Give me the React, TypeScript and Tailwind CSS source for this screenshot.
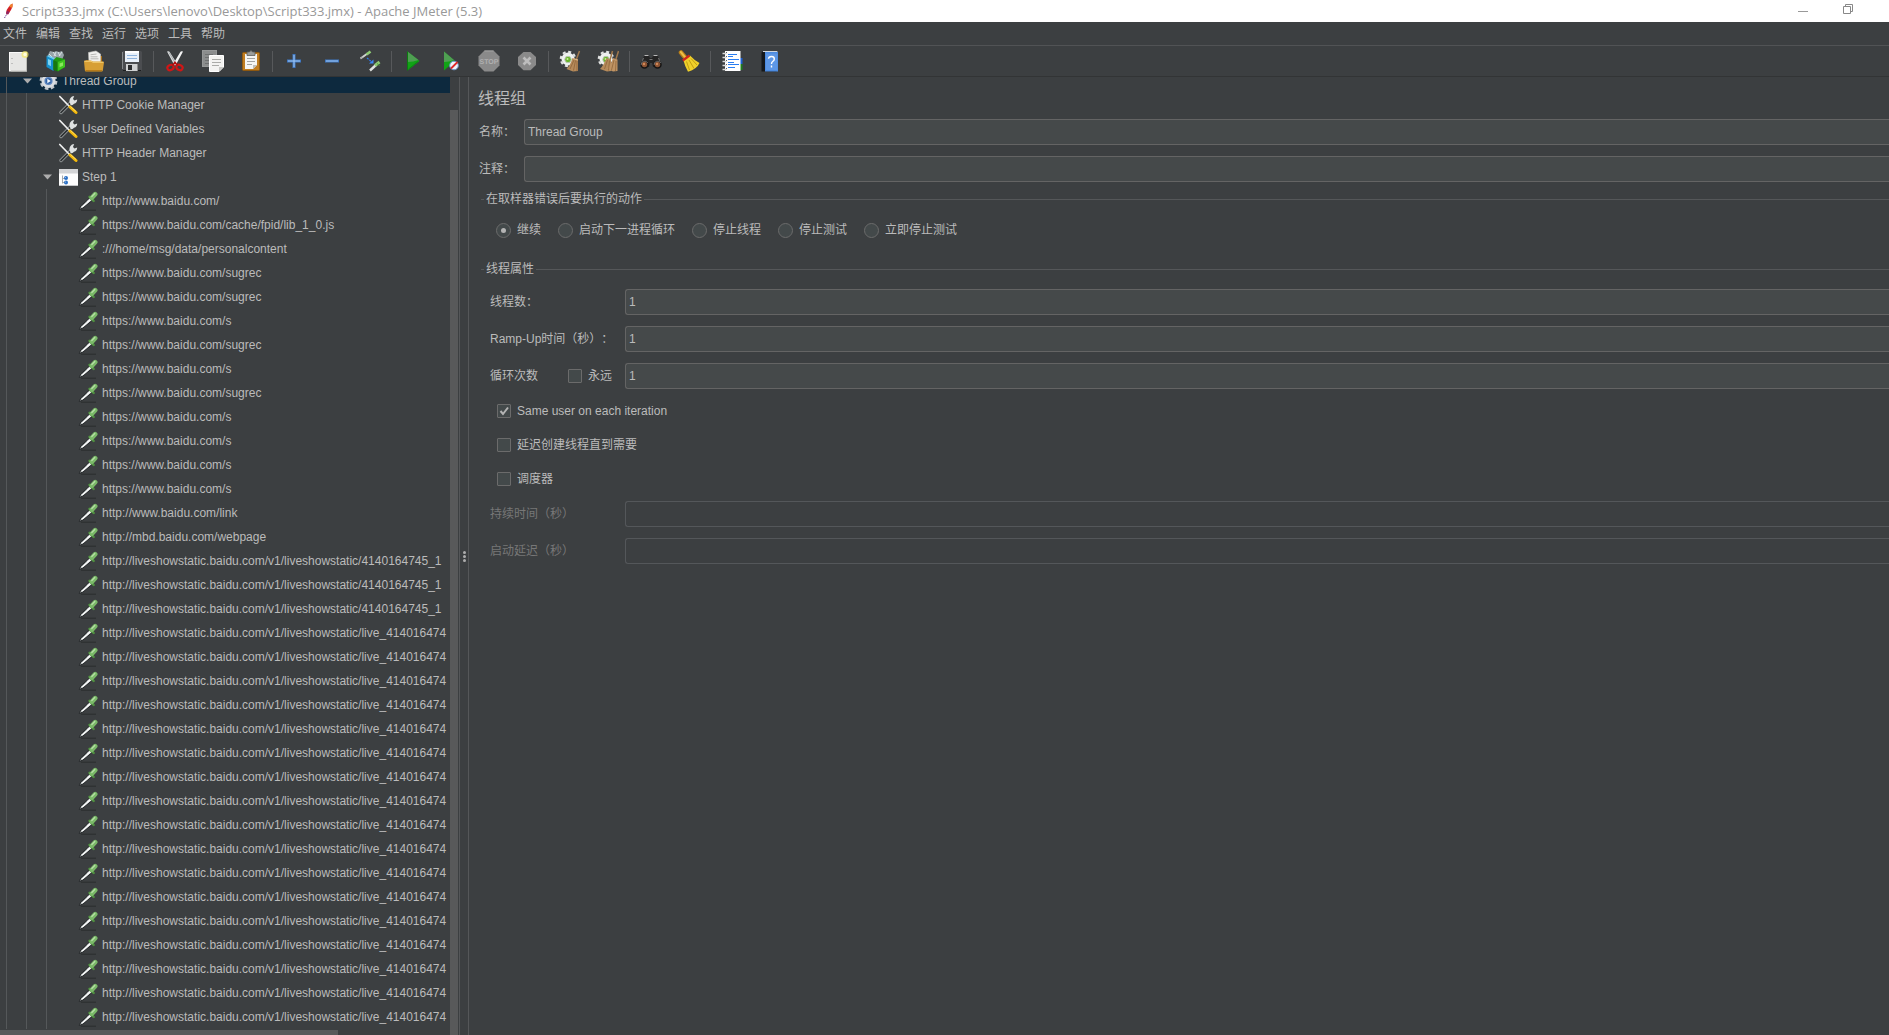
import React, { useState } from "react";

type IconProps = { children: React.ReactNode };

function Glyph({ children }: IconProps) {
  return (
    <svg viewBox="0 0 22 22" className="h-[22px] w-[22px]" fill="none" aria-hidden="true">
      {children}
    </svg>
  );
}

const NewIcon = () => (
  <Glyph>
    <rect x="2.500" y="2.500" width="17" height="18.500" fill="#e6e6e4" stroke="#fafafa" />
    <path d="M4 21h15.500V7" stroke="#bdbdb8" />
    <path d="M4.500 8.500h1M4.500 13.500h1" stroke="#999" />
    <circle cx="18" cy="4.500" r="3.500" fill="#f5e86a" fillOpacity=".7" />
    <circle cx="18" cy="4.500" r="1.700" fill="#fffde0" />
  </Glyph>
);

const TemplatesIcon = () => (
  <Glyph>
    <path d="M3 5l2-4 4 1 2-1 3 1 3-1 2 4-2 5-12 1z" fill="#98a4a9" />
    <path d="M4 4l3 3M8 2l3 4M13 2l2 4M9 6l2-4M14 6l3-4" stroke="#dde4e7" />
    <path d="M1.500 6l7 3v12L1.500 17z" fill="#1792cf" />
    <path d="M1.500 6l2-.8 6.500 3-1.500 1z" fill="#6fd0f5" />
    <path d="M3 9l3 1.300v6L3 14.500z" fill="#7fd4f2" />
    <path d="M8.500 10l3-3 8 2 .5 8-7 4.500-4.500-2z" fill="#1f9a12" />
    <path d="M12.500 12L20 9.500V17l-7.500 4z" fill="#3fc51f" />
    <path d="M8.500 10l4 2v9.500l-4-1.800z" fill="#17780f" />
    <path d="M14.500 13.500l3.500-1.300v3.500l-3.500 1.500z" fill="#8be65f" />
  </Glyph>
);

const OpenIcon = () => (
  <Glyph>
    <path d="M3 10h4V6h12v6H3z" fill="#a86f17" />
    <path d="M5.500 2.500L13 1l4.500 3v9H6z" fill="#f1f1ef" stroke="#c9c9c5" strokeWidth=".6" />
    <path d="M7.500 4.800l6-.8M7.500 6.800h7M7.500 8.800h8" stroke="#a8a8a4" strokeWidth=".8" />
    <path d="M1 11.500q0-1 1-1h6l2 1h10q1 0 1 1l-1.200 8q-.1 1-1 1H3q-1 0-1.100-1z" fill="#d79f35" />
    <path d="M1.500 11.300h6.500l2 1h10.300" stroke="#f3cd74" />
    <path d="M2.500 20.800h16.500" stroke="#a96c10" />
  </Glyph>
);

const SaveIcon = () => (
  <Glyph>
    <path d="M2 1h18l1 1v18l-1 1H3l-2-2V2z" fill="#4b4d50" />
    <path d="M1.500 19V2" stroke="#85888b" />
    <path d="M2 20.500h18" stroke="#1d1e1f" />
    <rect x="4" y="1" width="14" height="11" fill="#e9f1fa" />
    <path d="M4 2h14" stroke="#fff" strokeWidth="2" />
    <path d="M6 5.500h10M6 8.500h10" stroke="#8fb4de" />
    <rect x="5" y="14" width="12" height="7" fill="#cfd1d2" />
    <rect x="7" y="15" width="4" height="5" fill="#2b2d2f" />
    <path d="M16.500 14v7" stroke="#8d8f90" />
  </Glyph>
);

const CutIcon = () => (
  <Glyph>
    <path d="M3 1.500q2-1 3 1l7 11-2.500 2z" fill="#d9dcdd" />
    <path d="M19 1.500q-2-1-3 1L9.500 13.500l2 2z" fill="#f4f5f5" />
    <path d="M5 2.500l6.500 11" stroke="#8e9293" strokeWidth=".7" />
    <ellipse cx="6.500" cy="17.500" rx="3.200" ry="2.600" stroke="#d01616" strokeWidth="2.200" transform="rotate(-25 6.500 17.500)" />
    <ellipse cx="15.500" cy="17.500" rx="3.200" ry="2.600" stroke="#d01616" strokeWidth="2.200" transform="rotate(25 15.500 17.500)" />
    <path d="M8.500 15.500l2.500-3 2.500 3" stroke="#b30f0f" strokeWidth="1.800" />
  </Glyph>
);

const CopyIcon = () => (
  <Glyph>
    <rect x=".5" y=".5" width="14" height="16" fill="#8b8d8d" stroke="#969898" />
    <path d="M3 4.500h8M3 7.500h4M3 10.500h4M3 13.500h4" stroke="#6e7070" />
    <path d="M7.500 5.500h14V17L17 21.500H7.500z" fill="#f3f3f1" stroke="#fff" />
    <path d="M10 9.500h9M10 12.500h9M10 15.500h7" stroke="#aaaba8" />
    <path d="M17 21.500V17h4.500z" fill="#c7c8c5" />
  </Glyph>
);

const PasteIcon = () => (
  <Glyph>
    <rect x="2.500" y="2.500" width="17" height="18" rx="1" fill="#c07d20" stroke="#8f5910" />
    <path d="M5 4h12v11l-4 4H5z" fill="#f5f5f3" />
    <path d="M13 19v-4h4z" fill="#bdbeba" />
    <path d="M7 8.500h8M7 11.500h8M7 14.500h5" stroke="#a3a4a1" />
    <path d="M7 2h2.500q1.500-3 3 0H15v3.500H7z" fill="#9b9d9b" stroke="#5c5e5c" strokeWidth=".8" />
  </Glyph>
);

const PlusIcon = () => (
  <Glyph>
    <path d="M11 4v14M4 11h14" stroke="#3f78c4" strokeWidth="3" />
    <path d="M11 5v12M5 11h12" stroke="#a5cbf5" strokeWidth="1" />
  </Glyph>
);

const MinusIcon = () => (
  <Glyph>
    <path d="M4 11h14" stroke="#3f78c4" strokeWidth="3" />
    <path d="M5 11h12" stroke="#a5cbf5" strokeWidth="1" />
  </Glyph>
);

const ToggleIcon = () => (
  <Glyph>
    <path d="M1.500 8.500l7-5" stroke="#cfd2d0" strokeWidth="2" />
    <path d="M7.500 4.500l4-3" stroke="#8ecb74" strokeWidth="2.800" />
    <path d="M1 9l2.500-1.800" stroke="#8c8f8f" />
    <path d="M8 8l5.500 4.500" stroke="#2f78ea" strokeWidth="1.200" strokeDasharray="2 1" />
    <path d="M14.500 9.500v4h-4.500z" fill="#3a86f5" />
    <path d="M11 20.500l6-5.500" stroke="#dfe2e0" strokeWidth="2.400" />
    <path d="M16 15.500l4.500-3.500" stroke="#8ecb74" strokeWidth="3" />
    <path d="M18 13.500l2.500 2" stroke="#4e9a3a" />
  </Glyph>
);

const StartIcon = () => (
  <Glyph>
    <path d="M5.500 1.500v19L17.500 11z" fill="#11a316" />
    <path d="M5.500 1.500v10.500q6 0 11-2z" fill="#4f9f52" />
    <path d="M5.500 1.500v19" stroke="#0c7a10" />
    <path d="M6.500 19L16 11.500" stroke="#0b8a0f" />
  </Glyph>
);

const StartNoTimersIcon = () => (
  <Glyph>
    <path d="M4 1.500v19L15 11z" fill="#11a316" />
    <path d="M4 1.500v10.500q5 0 10-2z" fill="#4f9f52" />
    <circle cx="14" cy="15.500" r="4.300" fill="#eef3fa" stroke="#6d97cf" />
    <path d="M11 18.500l6.500-6.500" stroke="#dc2a2a" strokeWidth="1.800" />
  </Glyph>
);

const StopIcon = () => (
  <Glyph>
    <path d="M6.500.5h9l6 6v9l-6 6h-9l-6-6v-9z" fill="#8a8a8a" />
    <path d="M6.500 1h9" stroke="#a3a3a3" />
    <text x="11" y="14" textAnchor="middle" fontSize="7" fontWeight="700" fontFamily="Liberation Sans, Arial, sans-serif" fill="#b0b0b0" textRendering="geometricPrecision">
      STOP
    </text>
  </Glyph>
);

const ShutdownIcon = () => (
  <Glyph>
    <path d="M7.500 2h7l5.500 5v8l-5.500 5.200h-7L2 15V7z" fill="#8a8a8a" />
    <path d="M7.500 7.500l7 7M14.500 7.500l-7 7" stroke="#bdbdbd" strokeWidth="2.600" />
  </Glyph>
);

const Gear = () => (
  <>
    <circle cx="9" cy="9" r="6.500" fill="#eef0ef" />
    <circle cx="9" cy="9" r="7.200" stroke="#e2e4e3" strokeWidth="2.200" strokeDasharray="3 2.650" />
    <circle cx="9" cy="9.500" r="3.200" fill="#69b52b" stroke="#b9c4b1" />
    <circle cx="8.500" cy="9" r="1" fill="#c9ee9d" />
  </>
);

const ClearIcon = () => (
  <Glyph>
    <Gear />
    <path d="M20.500 1L17.500 9" stroke="#a0784c" strokeWidth="1.500" />
    <path d="M13.500 8l5.500 1.500V21l-5 .5-6.500-2.500q4-4 6-11z" fill="#b58a5b" />
    <path d="M15 10l-4 9M16.500 10.500l-2 10M18 11v10" stroke="#8a6035" strokeWidth=".7" />
    <path d="M14 8.500l5 1.500" stroke="#e2b987" />
  </Glyph>
);

const ClearAllIcon = () => (
  <Glyph>
    <Gear />
    <path d="M15.500 1l-2.500 9M21.500 1L19 9" stroke="#a0784c" strokeWidth="1.500" />
    <path d="M9.500 8l4.500 1.500V21l-4 .5L3 19q4-4 6.500-11z" fill="#b58a5b" />
    <path d="M16 8l4.500 1.500V21l-4.500.5-6-3Q14 15 16 8z" fill="#bf9363" />
    <path d="M10.500 10l-3 9M12.500 10.500l-1 10M17 10l-2.500 10M19 11l-.5 10" stroke="#8a6035" strokeWidth=".7" />
  </Glyph>
);

const SearchIcon = () => (
  <Glyph>
    <path d="M1 13l3.500-8h4l1.500 3h2l1.500-3h4L21 13v4h-8l-1-4h-2l-1 4H1z" fill="#242424" />
    <path d="M4.500 5.500h4M13.500 5.500h4" stroke="#b9b9b9" strokeWidth="1.200" />
    <path d="M3.500 8l-2 5M18.500 8l2 5M9.500 9.500h3" stroke="#8b8b8b" strokeWidth=".8" />
    <circle cx="4.500" cy="14.500" r="3.500" fill="#8b5232" stroke="#151515" strokeWidth="1.500" />
    <circle cx="17.500" cy="14.500" r="3.500" fill="#8b5232" stroke="#151515" strokeWidth="1.500" />
    <path d="M1.200 15a3.500 3.500 0 0 1 6.600-2M14.200 15a3.500 3.500 0 0 1 6.600-2" stroke="#8f8f8f" strokeWidth=".7" />
    <circle cx="4" cy="14" r="1.200" fill="#d08a5a" />
    <circle cx="17" cy="14" r="1.200" fill="#d08a5a" />
  </Glyph>
);

const BroomIcon = () => (
  <Glyph>
    <path d="M3 2.500l5 6" stroke="#b87e19" strokeWidth="4.500" strokeLinecap="round" />
    <path d="M2.800 2l4.500 5.500" stroke="#eebf45" strokeWidth="2" strokeLinecap="round" />
    <path d="M5.500 10.500l6.500-5q4 4.500 9.500 7.500-2.500 6-11.500 8.800-3-5-4.500-11.300z" fill="#efd02a" />
    <path d="M8.500 11.500l3 8.500M11 10l5 8.500M13 8.500l6 6.500" stroke="#b8920c" strokeWidth=".8" />
    <path d="M4.800 10.500l6.700-5" stroke="#d0281c" strokeWidth="2.200" />
  </Glyph>
);

const FunctionIcon = () => (
  <Glyph>
    <rect x="17" y="8" width="4.500" height="6" fill="#1b5fd0" />
    <rect x="17" y="14" width="4.500" height="6" fill="#1e7d1e" />
    <rect x="4" y="1" width="15.500" height="20" fill="#fff" />
    <path d="M7 4.500h9M7 9.500h11M7 17.500h7" stroke="#2a7df0" strokeWidth="1.200" />
    <path d="M7 6.500h5M7 12.500h6M7 14.500h11" stroke="#2a7df0" />
    <path d="M1.500 3.500h4M1.500 7.500h4M1.500 11.500h4M1.500 15.500h4M1.500 19.500h4" stroke="#d9d9d9" strokeWidth="1.500" />
    <path d="M5.500 2v18" stroke="#555" strokeWidth=".9" strokeDasharray="1 3" />
  </Glyph>
);

const HelpIcon = () => (
  <Glyph>
    <path d="M2.500 2.500l2-1.500H19v19.500l-2 1H2.500z" fill="#15181c" />
    <path d="M4 1.500h14.500" stroke="#cfd6de" />
    <rect x="6" y="2" width="13" height="19.500" fill="#4c8be0" />
    <rect x="7" y="3.500" width="11.500" height="16.500" fill="#6da3ec" fillOpacity=".5" />
    <path d="M9.500 8.800Q9.700 6.500 12.500 6.500t2.800 2.500q0 1.500-1.600 2.500-1.200.8-1.200 2.400M12.500 15.500v2" stroke="#fff" strokeWidth="1.400" />
  </Glyph>
);

type Tool = { label: string; Icon: () => React.JSX.Element; disabled?: boolean };

const toolGroups: Tool[][] = [
  [
    { label: "新建", Icon: NewIcon },
    { label: "模板", Icon: TemplatesIcon },
    { label: "打开", Icon: OpenIcon },
    { label: "保存", Icon: SaveIcon },
  ],
  [
    { label: "剪切", Icon: CutIcon },
    { label: "复制", Icon: CopyIcon },
    { label: "粘贴", Icon: PasteIcon },
  ],
  [
    { label: "展开", Icon: PlusIcon },
    { label: "收起", Icon: MinusIcon },
    { label: "切换", Icon: ToggleIcon },
  ],
  [
    { label: "启动", Icon: StartIcon },
    { label: "不停顿开始", Icon: StartNoTimersIcon },
    { label: "停止", Icon: StopIcon, disabled: true },
    { label: "关闭", Icon: ShutdownIcon, disabled: true },
  ],
  [
    { label: "清除", Icon: ClearIcon },
    { label: "清除全部", Icon: ClearAllIcon },
  ],
  [
    { label: "查找", Icon: SearchIcon },
    { label: "重置查找", Icon: BroomIcon },
  ],
  [
    { label: "函数助手", Icon: FunctionIcon },
    { label: "帮助", Icon: HelpIcon },
  ],
];

function TreeGlyph({ children }: IconProps) {
  return (
    <svg viewBox="0 0 20 20" className="h-5 w-5 shrink-0" fill="none" aria-hidden="true">
      {children}
    </svg>
  );
}

const GearIcon = () => (
  <TreeGlyph>
    <circle cx="10.500" cy="10" r="7.700" stroke="#c3c7cc" strokeWidth="2.400" strokeDasharray="3.600 2.450" />
    <circle cx="10.500" cy="10" r="5.700" fill="#b9cbe4" stroke="#dadde1" strokeWidth="2.800" />
    <circle cx="10.500" cy="10" r="4" fill="#5f86bd" />
    <circle cx="10.500" cy="10" r="2.800" fill="#2f62a8" />
    <path d="M9.300 7.800v4.400l3.500-2.200z" fill="#f2f7fd" />
  </TreeGlyph>
);

const ToolsIcon = () => (
  <TreeGlyph>
    <path d="M3 17.500L13.500 7" stroke="#8d9192" strokeWidth="3.400" strokeLinecap="round" />
    <path d="M3 17.500L12.500 8" stroke="#2a2e30" strokeWidth="1.600" strokeLinecap="round" />
    <path d="M11.500 7.500q-.5-4 2.500-6l2.200-.5-1.200 3 1.500 1.500 2.700-1q0 3.500-3.200 4.300-1.500 2-3 1.200z" fill="#dfe2e2" />
    <path d="M1.800 1.500L11 11" stroke="#f0f1f1" strokeWidth="1.700" strokeLinecap="round" />
    <path d="M12 12l6 5.500" stroke="#f4b90b" strokeWidth="3" strokeLinecap="round" />
    <path d="M12.500 11.500l5.500 5" stroke="#ffe06a" strokeWidth=".9" />
  </TreeGlyph>
);

const ControllerIcon = () => (
  <TreeGlyph>
    <rect x="1" y="2" width="19" height="17" fill="#fdfdfd" />
    <rect x="1" y="2" width="19" height="4.500" fill="#d3d4d6" />
    <path d="M4.500 8.500v8M4.500 11.500H7M4.500 15.500H7" stroke="#9aa0a6" strokeWidth=".9" />
    <circle cx="8" cy="11" r="2" fill="#2a6fc4" />
    <circle cx="8" cy="15.500" r="2" fill="#2a6fc4" />
    <circle cx="7.500" cy="10.500" r=".6" fill="#9cc3ee" />
    <circle cx="7.500" cy="15" r=".6" fill="#9cc3ee" />
    <path d="M1 18.500h19" stroke="#c4c6c8" />
  </TreeGlyph>
);

const SamplerIcon = () => (
  <TreeGlyph>
    <path d="M3 19.200h15" stroke="#2b2d2e" />
    <path d="M1.300 18.500l1.500-3.500L11.500 7l2.500 2.500-9 7.500z" fill="#c9cdcd" stroke="#222527" strokeWidth="1" />
    <path d="M4 16l8.500-7.500" stroke="#fbfcfc" strokeWidth="1.400" />
    <path d="M3.500 15.300L9 10.200" stroke="#6d7274" strokeWidth=".8" />
    <path d="M11.500 5.800l4.200 4.200" stroke="#4f8f40" strokeWidth="2.400" strokeLinecap="round" />
    <path d="M13.800 6.800l3.400-3.600" stroke="#7ab968" strokeWidth="4.600" strokeLinecap="round" />
    <path d="M13.800 5.500l3-3" stroke="#b9dfa9" strokeWidth="1.200" strokeLinecap="round" />
  </TreeGlyph>
);

type Node = { text: string; depth: 1 | 2 | 3; Icon: () => React.JSX.Element; open?: boolean; selected?: boolean };

const sampler = (text: string): Node => ({ text, depth: 3, Icon: SamplerIcon });

const nodes: Node[] = [
  { text: "Thread Group", depth: 1, Icon: GearIcon, open: true, selected: true },
  { text: "HTTP Cookie Manager", depth: 2, Icon: ToolsIcon },
  { text: "User Defined Variables", depth: 2, Icon: ToolsIcon },
  { text: "HTTP Header Manager", depth: 2, Icon: ToolsIcon },
  { text: "Step 1", depth: 2, Icon: ControllerIcon, open: true },
  ...[
    "http://www.baidu.com/",
    "https://www.baidu.com/cache/fpid/lib_1_0.js",
    ":///home/msg/data/personalcontent",
    "https://www.baidu.com/sugrec",
    "https://www.baidu.com/sugrec",
    "https://www.baidu.com/s",
    "https://www.baidu.com/sugrec",
    "https://www.baidu.com/s",
    "https://www.baidu.com/sugrec",
    "https://www.baidu.com/s",
    "https://www.baidu.com/s",
    "https://www.baidu.com/s",
    "https://www.baidu.com/s",
    "http://www.baidu.com/link",
    "http://mbd.baidu.com/webpage",
  ].map(sampler),
  ...Array.from({ length: 3 }, () => sampler("http://liveshowstatic.baidu.com/v1/liveshowstatic/4140164745_1")),
  ...Array.from({ length: 17 }, () => sampler("http://liveshowstatic.baidu.com/v1/liveshowstatic/live_414016474")),
];

function TreeRow({ node }: { node: Node }) {
  const { Icon } = node;
  return (
    <li
      role="treeitem"
      aria-level={node.depth}
      aria-selected={!!node.selected}
      className={`flex h-6 items-center pl-[6px] ${node.selected ? "bg-[#0d293e]" : ""}`}
    >
      {Array.from({ length: node.depth - 1 }, (_, i) => (
        <span key={i} className="h-full w-5 shrink-0 border-l border-[#55585a]" />
      ))}
      <span className="h-full w-[11px] shrink-0 border-l border-[#55585a]" />
      <span className="flex w-[21px] shrink-0 justify-center">
        {node.open && (
          <button type="button" aria-label={`收起 ${node.text}`} className="block">
            <svg viewBox="0 0 9 6" className="h-[6px] w-[9px]" aria-hidden="true">
              <path d="M0 .5h9L4.500 5.500z" fill="#adadad" />
            </svg>
          </button>
        )}
      </span>
      <Icon />
      <span className="ml-1 whitespace-nowrap">{node.text}</span>
    </li>
  );
}

function GroupTitle({ children }: IconProps) {
  return (
    <div className="flex h-5 items-center gap-[2px] pl-3">
      <span className="h-px w-[3px] bg-[#555759]" />
      <h2>{children}</h2>
      <span className="h-px flex-1 bg-[#555759]" />
    </div>
  );
}

const fieldClass =
  "h-[26px] min-w-0 flex-1 rounded-l-[3px] border border-r-0 border-[#646464] bg-[#45494a] px-[3px] outline-none disabled:border-[#54575a] disabled:bg-transparent";

function Check({ label, defaultChecked }: { label: string; defaultChecked?: boolean }) {
  return (
    <label className="flex items-center gap-[6px]">
      <span className="grid">
        <input
          type="checkbox"
          defaultChecked={defaultChecked}
          className="peer col-start-1 row-start-1 h-[14px] w-[14px] appearance-none rounded-[1px] border border-[#6b6b6b] bg-[#43494a]"
        />
        <svg
          viewBox="0 0 14 14"
          className="pointer-events-none invisible col-start-1 row-start-1 h-[14px] w-[14px] peer-checked:visible"
          fill="none"
          aria-hidden="true"
        >
          <path d="M3.500 7l2.500 3L11 3.500" stroke="#b4b4b4" strokeWidth="2" />
        </svg>
      </span>
      {label}
    </label>
  );
}

function PropertyRow({ id, label, value, disabled, children }: { id: string; label: string; value?: string; disabled?: boolean; children?: React.ReactNode }) {
  return (
    <div className="flex items-center">
      <div className="flex w-[135px] shrink-0 items-center justify-between pr-[13px]">
        <label htmlFor={id} className={`whitespace-nowrap ${disabled ? "text-[#777]" : ""}`}>
          {label}
        </label>
        {children}
      </div>
      <input id={id} type="text" defaultValue={value} disabled={disabled} className={fieldClass} />
    </div>
  );
}

const errorActions = ["继续", "启动下一进程循环", "停止线程", "停止测试", "立即停止测试"];

export default function App() {
  const [action, setAction] = useState(errorActions[0]);

  return (
    <div className="flex h-screen flex-col overflow-hidden bg-[#3c3f41] font-['Liberation_Sans','Noto_Sans_CJK_SC',sans-serif] text-[12px] leading-4 text-[#bbb] [text-spacing-trim:space-all]">
      <header className="flex h-[22px] shrink-0 items-center justify-between bg-white pr-9 pl-1 text-[#999]">
        <div className="flex items-center gap-[9px]">
          <svg viewBox="0 0 9 16" className="h-4 w-[9px]" fill="none" aria-hidden="true">
            <path d="M8.500.5Q9 4 7 7l-3 4.500-2-1Q2.500 6 5 3.500z" fill="#d22128" />
            <path d="M8.500.5Q6.500 1 5 3.500l3 1.500Q9 3 8.500.5z" fill="#f0802a" />
            <path d="M4 11.500l-2-1 1-3 2.500 1.500z" fill="#8e2463" />
            <path d="M2.500 11.500L.5 15" stroke="#6d3a8c" strokeDasharray="1.500 1" />
          </svg>
          <h1 className="font-['Open_Sans','Noto_Sans',sans-serif] text-[13px] whitespace-nowrap">
            Script333.jmx (C:\Users\lenovo\Desktop\Script333.jmx) - Apache JMeter (5.3)
          </h1>
        </div>
        <div className="flex h-full items-center gap-[35px]">
          <button type="button" aria-label="最小化">
            <svg viewBox="0 0 10 10" className="block h-[10px] w-[10px]" aria-hidden="true">
              <path d="M0 5.500h10" stroke="#999" />
            </svg>
          </button>
          <button type="button" aria-label="还原" className="pb-1">
            <svg viewBox="0 0 10 10" className="block h-[10px] w-[10px]" fill="none" aria-hidden="true">
              <path d="M2.500 2V.5h7v7H8M.5 2.500h7v7h-7z" stroke="#888" />
            </svg>
          </button>
        </div>
      </header>

      <nav className="flex h-6 shrink-0 items-center gap-[9px] border-b border-[#515355] pl-[3px]">
        {["文件", "编辑", "查找", "运行", "选项", "工具", "帮助"].map((item) => (
          <button key={item} type="button">
            {item}
          </button>
        ))}
      </nav>

      <div role="toolbar" className="flex h-[31px] shrink-0 items-center gap-[2px] border-b border-[#323435]">
        {toolGroups.map((group, index) => (
          <React.Fragment key={index}>
            {index > 0 && (
              <span className="flex w-[3px] justify-center">
                <span className="h-[21px] w-px bg-[#57595b]" />
              </span>
            )}
            {group.map(({ label, Icon, disabled }) => (
              <button key={label} type="button" aria-label={label} disabled={disabled} className="flex h-7 w-9 items-center justify-center">
                <Icon />
              </button>
            ))}
          </React.Fragment>
        ))}
      </div>

      <div className="flex min-h-0 flex-1">
        <aside className="flex w-[460px] shrink-0 border-r border-[#555759]">
          <div className="flex min-w-0 flex-1 flex-col">
            <ul role="tree" className="min-h-0 flex-1 overflow-hidden">
              <div className="-mt-2">
                {nodes.map((node, index) => (
                  <TreeRow key={index} node={node} />
                ))}
              </div>
            </ul>
            <div className="h-[5px] shrink-0">
              <div className="h-full w-3/4 bg-[#57595b]" />
            </div>
          </div>
          <div className="flex w-[9px] shrink-0 flex-col pt-[33px] pr-px">
            <div className="flex-1 bg-[#58595a]" />
          </div>
        </aside>

        <div role="separator" className="flex w-[9px] shrink-0 flex-col items-center justify-center gap-px border-r border-[#555759]">
          <span className="h-[3px] w-[3px] rounded-full bg-[#adadad]" />
          <span className="h-[3px] w-[3px] rounded-full bg-[#adadad]" />
          <span className="h-[3px] w-[3px] rounded-full bg-[#adadad]" />
        </div>

        <main className="min-w-0 flex-1 pt-[10px]">
          <h2 className="pl-[9px] text-[16px] leading-6">线程组</h2>

          <div className="mt-2 flex flex-col gap-[11px] pl-[10px]">
            <div className="flex items-center">
              <label htmlFor="name" className="w-[45px] shrink-0 whitespace-nowrap">名称：</label>
              <input id="name" type="text" defaultValue="Thread Group" className={fieldClass} />
            </div>
            <div className="flex items-center">
              <label htmlFor="comment" className="w-[45px] shrink-0 whitespace-nowrap">注释：</label>
              <input id="comment" type="text" className={fieldClass} />
            </div>
          </div>

          <section className="mt-[7px]">
            <GroupTitle>在取样器错误后要执行的动作</GroupTitle>
            <div className="mt-[13px] flex gap-[17px] pl-[27px]">
              {errorActions.map((item) => (
                <label key={item} className="flex items-center gap-[6px] whitespace-nowrap">
                  <span className="grid place-items-center">
                    <input
                      type="radio"
                      name="on-error"
                      checked={action === item}
                      onChange={() => setAction(item)}
                      className="peer col-start-1 row-start-1 h-[15px] w-[15px] appearance-none rounded-full border border-[#6b6b6b] bg-[#43494a]"
                    />
                    <span className="pointer-events-none invisible col-start-1 row-start-1 h-[5px] w-[5px] rounded-full bg-[#b4b4b4] peer-checked:visible" />
                  </span>
                  {item}
                </label>
              ))}
            </div>
          </section>

          <section className="mt-[21px]">
            <GroupTitle>线程属性</GroupTitle>
            <div className="mt-[10px] flex flex-col pl-[21px]">
              <div className="flex flex-col gap-[11px]">
                <PropertyRow id="threads" label="线程数：" value="1" />
                <PropertyRow id="ramp" label="Ramp-Up时间（秒）：" value="1" />
                <PropertyRow id="loops" label="循环次数" value="1">
                  <Check label="永远" />
                </PropertyRow>
              </div>
              <div className="my-[14px] flex flex-col gap-[18px] pl-[7px]">
                <Check label="Same user on each iteration" defaultChecked />
                <Check label="延迟创建线程直到需要" />
                <Check label="调度器" />
              </div>
              <div className="flex flex-col gap-[11px]">
                <PropertyRow id="duration" label="持续时间（秒）" disabled />
                <PropertyRow id="delay" label="启动延迟（秒）" disabled />
              </div>
            </div>
          </section>
        </main>
      </div>
    </div>
  );
}
